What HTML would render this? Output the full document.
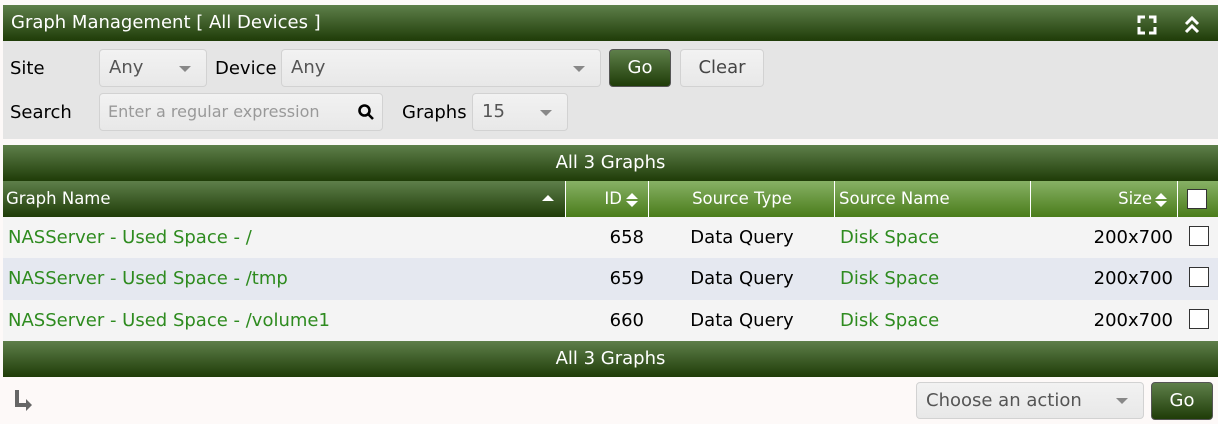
<!DOCTYPE html>
<html><head><style>
*{box-sizing:border-box;margin:0;padding:0}
body{width:1218px;height:424px;background:#fdf9f8;font-family:"DejaVu Sans","Liberation Sans",sans-serif;font-size:18px;position:relative;overflow:hidden;color:#000}
.a{position:absolute}
.dg{background:linear-gradient(#5e7f4a,#1f3c08);color:#fff}
.lg{background:linear-gradient(#87b165,#4a7c1a);color:#fff}
.sel{position:absolute;background:linear-gradient(#f2f2f2,#e8e8e8);border:1px solid #d2d2d2;border-radius:4px;color:#555;padding:0 0 0 9px;line-height:36px;font-size:18px}
.sel .ar{position:absolute;right:15px;top:16px;width:0;height:0;border-left:6px solid transparent;border-right:6px solid transparent;border-top:6px solid #888}
.t{position:absolute;line-height:40px}
.g{color:#2e8b1f}
.cb{position:absolute;width:20px;height:20px;background:#fff;border:1px solid #333}
.vs{position:absolute;top:181px;width:1px;height:36px;background:#fff}
.h{font-size:16.5px}
</style></head><body>
<div class="a dg" style="left:3px;top:5px;width:1215px;height:36px;line-height:36px;padding-left:8px;font-size:18px">Graph Management [ All Devices ]</div>
<svg class="a" style="left:1137px;top:15px" width="20" height="20" viewBox="0 0 20 20" fill="none" stroke="#fff" stroke-width="3"><path d="M2 8V2h6M12 2h6v6M18 12v6h-6M8 18H2v-6"/></svg>
<svg class="a" style="left:1184px;top:15px" width="16" height="20" viewBox="0 0 16 20" fill="none" stroke="#fff" stroke-width="3"><path d="M2 9l6-6 6 6M2 17l6-6 6 6"/></svg>
<div class="a" style="left:3px;top:41px;width:1215px;height:98px;background:#e5e5e5"></div>
<div class="t" style="left:10px;top:49px">Site</div>
<div class="sel" style="left:99px;top:49px;width:108px;height:38px">Any<span class="ar"></span></div>
<div class="t" style="left:215px;top:49px">Device</div>
<div class="sel" style="left:281px;top:49px;width:320px;height:38px">Any<span class="ar"></span></div>
<div class="a dg" style="left:609px;top:49px;width:62px;height:38px;border-radius:4px;border:1px solid #555;text-align:center;line-height:36px">Go</div>
<div class="sel" style="left:680px;top:49px;width:84px;height:38px;text-align:center;padding:0;color:#444">Clear</div>
<div class="t" style="left:10px;top:93px">Search</div>
<div class="sel" style="left:99px;top:93px;width:284px;height:38px;color:#999;padding-left:8px;font-size:16px">Enter a regular expression</div>
<svg class="a" style="left:357px;top:103px" width="18" height="18" viewBox="0 0 18 18" fill="none" stroke="#000" stroke-width="2.6"><circle cx="7.5" cy="7.5" r="5"/><path d="M11 11l5 5"/></svg>
<div class="t" style="left:402px;top:93px">Graphs</div>
<div class="sel" style="left:472px;top:93px;width:96px;height:38px">15<span class="ar"></span></div>
<div class="a dg" style="left:3px;top:145px;width:1215px;height:36px;line-height:36px;text-align:center">All 3 Graphs</div>
<div class="a lg" style="left:3px;top:181px;width:1215px;height:36px"></div>
<div class="a dg h" style="left:3px;top:181px;width:562px;height:36px;line-height:36px;padding-left:3px">Graph Name</div>
<div class="a" style="left:542px;top:195px;width:0;height:0;border-left:6px solid transparent;border-right:6px solid transparent;border-bottom:6px solid #fff"></div>
<div class="vs" style="left:565px"></div><div class="vs" style="left:648px"></div><div class="vs" style="left:834px"></div><div class="vs" style="left:1030px"></div><div class="vs" style="left:1177px"></div>
<div class="a h" style="left:566px;top:181px;width:56px;text-align:right;line-height:36px;color:#fff">ID</div>
<svg class="a" style="left:626px;top:192px" width="12" height="16" viewBox="0 0 12 16" fill="#fff"><path d="M0 7L6 1l6 6zM0 9l6 6 6-6z"/></svg>
<div class="a h" style="left:649px;top:181px;width:186px;text-align:center;line-height:36px;color:#fff">Source Type</div>
<div class="a h" style="left:839px;top:181px;line-height:36px;color:#fff">Source Name</div>
<div class="a h" style="left:1031px;top:181px;width:121px;text-align:right;line-height:36px;color:#fff">Size</div>
<svg class="a" style="left:1155px;top:192px" width="12" height="16" viewBox="0 0 12 16" fill="#fff"><path d="M0 7L6 1l6 6zM0 9l6 6 6-6z"/></svg>
<div class="cb" style="left:1187px;top:189px"></div>
<div class="a" style="left:3px;top:217px;width:1215px;height:41px;background:#f4f4f4"></div>
<div class="a" style="left:3px;top:258px;width:1215px;height:42px;background:#e5e8f0"></div>
<div class="a" style="left:3px;top:300px;width:1215px;height:41px;background:#f4f4f4"></div>
<div class="t g" style="left:8px;top:218px">NASServer - Used Space - /</div>
<div class="t g" style="left:8px;top:259px">NASServer - Used Space - /tmp</div>
<div class="t g" style="left:8px;top:301px">NASServer - Used Space - /volume1</div>
<div class="t" style="left:566px;top:218px;width:78px;text-align:right">658</div>
<div class="t" style="left:566px;top:259px;width:78px;text-align:right">659</div>
<div class="t" style="left:566px;top:301px;width:78px;text-align:right">660</div>
<div class="t" style="left:649px;top:218px;width:186px;text-align:center">Data Query</div>
<div class="t" style="left:649px;top:259px;width:186px;text-align:center">Data Query</div>
<div class="t" style="left:649px;top:301px;width:186px;text-align:center">Data Query</div>
<div class="t g" style="left:840px;top:218px">Disk Space</div>
<div class="t g" style="left:840px;top:259px">Disk Space</div>
<div class="t g" style="left:840px;top:301px">Disk Space</div>
<div class="t" style="left:1031px;top:218px;width:142px;text-align:right">200x700</div>
<div class="t" style="left:1031px;top:259px;width:142px;text-align:right">200x700</div>
<div class="t" style="left:1031px;top:301px;width:142px;text-align:right">200x700</div>
<div class="cb" style="left:1189px;top:226px"></div>
<div class="cb" style="left:1189px;top:267px"></div>
<div class="cb" style="left:1189px;top:309px"></div>
<div class="a dg" style="left:3px;top:341px;width:1215px;height:36px;line-height:36px;text-align:center">All 3 Graphs</div>
<svg class="a" style="left:14px;top:389px" width="20" height="22" viewBox="0 0 20 22" fill="#666"><path d="M1 1h4v13h7v-4l6 6-6 6v-4H1z"/></svg>
<div class="sel" style="left:916px;top:382px;width:228px;height:37px;line-height:35px;color:#555">Choose an action<span class="ar" style="top:15px"></span></div>
<div class="a dg" style="left:1151px;top:382px;width:62px;height:38px;border-radius:4px;border:1px solid #555;text-align:center;line-height:36px">Go</div>
</body></html>
